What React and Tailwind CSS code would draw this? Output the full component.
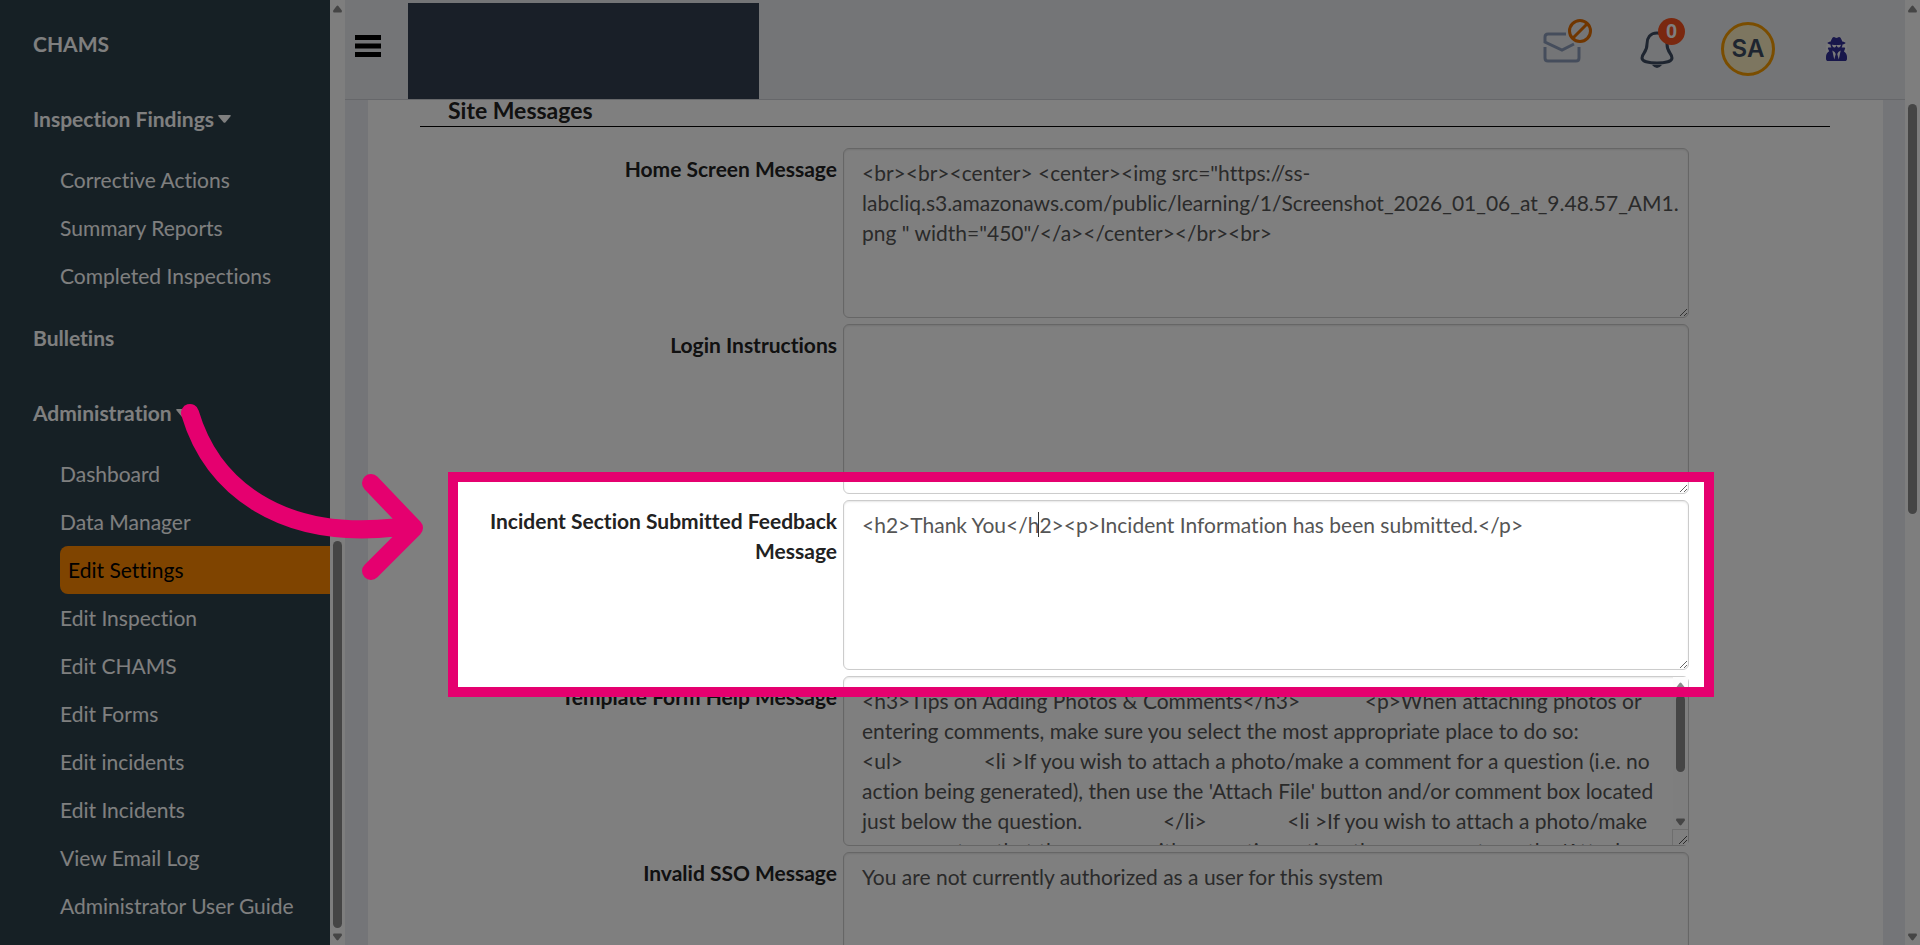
import React from 'react';
import { FaUserSecret } from 'react-icons/fa';

const navSections = [
  { title: 'CHAMS', items: [] },
  {
    title: 'Inspection Findings',
    caret: true,
    items: ['Corrective Actions', 'Summary Reports', 'Completed Inspections'],
  },
  { title: 'Bulletins', items: [] },
  {
    title: 'Administration',
    caret: true,
    items: [
      'Dashboard',
      'Data Manager',
      'Edit Settings',
      'Edit Inspection',
      'Edit CHAMS',
      'Edit Forms',
      'Edit incidents',
      'Edit Incidents',
      'View Email Log',
      'Administrator User Guide',
    ],
  },
];

const messages = [
  {
    id: 'home',
    label: 'Home Screen Message',
    value:
      '<br><br><center> <center><img src="https://ss-labcliq.s3.amazonaws.com/public/learning/1/Screenshot_2026_01_06_at_9.48.57_AM1.png " width="450"/</a></center></br><br>',
  },
  { id: 'login', label: 'Login Instructions', value: '' },
  {
    id: 'feedback',
    label: 'Incident Section Submitted Feedback Message',
    value: '<h2>Thank You</h2><p>Incident Information has been submitted.</p>',
    highlighted: true,
  },
  {
    id: 'template',
    label: 'Template Form Help Message',
    value:
      "<h3>Tips on Adding Photos & Comments</h3>            <p>When attaching photos or entering comments, make sure you select the most appropriate place to do so:               <ul>               <li >If you wish to attach a photo/make a comment for a question (i.e. no action being generated), then use the 'Attach File' button and/or comment box located just below the question.               </li>               <li >If you wish to attach a photo/make a comment so that the person with corrective action, then you must use the 'Attach File' button",
    scroll: true,
  },
  {
    id: 'sso',
    label: 'Invalid SSO Message',
    value: 'You are not currently authorized as a user for this system',
  },
];

const ArrowUp = () => (
  <svg className="h-2 w-[9px] shrink-0" viewBox="0 0 9 8" fill="#8b8b8b">
    <path d="M3.6 .9Q4.5 0 5.4 .9L8.8 5.6Q9.2 7.4 8 7.4H1Q-.2 7.4 .2 5.6Z" />
  </svg>
);

const ArrowDown = () => (
  <svg className="h-2 w-[9px] shrink-0" viewBox="0 0 9 8" fill="#8b8b8b">
    <path d="M3.6 7.1Q4.5 8 5.4 7.1L8.8 2.4Q9.2 .6 8 .6H1Q-.2 .6 .2 2.4Z" />
  </svg>
);

// start and size are percentages of the track
const Scrollbar = ({ start, size }) => (
  <div className="flex h-full w-[15px] shrink-0 flex-col items-center bg-[#fdfdfd] pt-[5px] pb-1">
    <ArrowUp />
    <div className="my-[5px] w-[9px] flex-1">
      <div style={{ height: `${start}%` }} />
      <div className="rounded-full bg-[#8b8b8b]" style={{ height: `${size}%` }} />
    </div>
    <ArrowDown />
  </div>
);

const Sidebar = () => (
  <nav className="flex w-[345px] shrink-0 bg-[#2c404b]">
    <div className="flex-1 overflow-hidden pt-1.5">
      {navSections.map((section) => (
        <div key={section.title}>
          <a href="#" className="flex h-[75px] items-center gap-1 pl-[33px] font-bold text-[#fefefe]">
            {section.title}
            {section.caret && (
              <svg className="h-2 w-[13px]" viewBox="0 0 13 8" fill="currentColor">
                <path d="M1 0H12Q13.4 .3 12.4 1.6L7.4 7.4Q6.5 8.2 5.6 7.4L.6 1.6Q-.4 .3 1 0Z" />
              </svg>
            )}
          </a>
          {section.items.length > 0 && (
            <ul className="pl-[60px]">
              {section.items.map((item) => (
                <li key={item}>
                  <a
                    href="#"
                    className={
                      item === 'Edit Settings'
                        ? 'flex h-12 items-center rounded-l-lg bg-[#ff8800] pl-2 text-black'
                        : 'flex h-12 items-center text-[#fefefe]'
                    }
                  >
                    {item}
                  </a>
                </li>
              ))}
            </ul>
          )}
        </div>
      ))}
    </div>
    <Scrollbar start={57.5} size={42.5} />
  </nav>
);

const Header = () => (
  <header className="flex h-[100px] shrink-0 items-center border-b border-[#ccced4] bg-[#e9ebee] pl-2.5">
    <button type="button" aria-label="Menu" className="mb-2">
      <svg className="h-[22px] w-[26px]" viewBox="0 0 26 22">
        <path d="M0 0H26V5H0ZM0 8.5H26V13.5H0ZM0 17H26V22H0Z" />
      </svg>
    </button>
    <div className="ml-[27px] h-24 w-[351px] self-end bg-[#333f50]" />
    <div className="ml-auto flex items-center pr-[58px] pb-0.5">
      <button type="button" aria-label="Messages off" className="mr-12">
        <svg className="h-[50px] w-[50px] overflow-visible" viewBox="0 0 50 50" fill="none">
          <path
            d="M24 10H6Q3 10 3 13V18L20 26L32 20M3 23V34Q3 37 6 37H34Q37 37 37 34V23"
            stroke="#8b9bb8"
            strokeWidth="3"
          />
          <circle cx="38" cy="7" r="10.5" stroke="#e06c00" strokeWidth="3" />
          <path d="M31 14L45 0" stroke="#e06c00" strokeWidth="3" />
        </svg>
      </button>
      <button type="button" aria-label="Notifications" className="relative mr-[37px]">
        <svg className="h-[50px] w-[44px]" viewBox="0 0 44 50" fill="none">
          <path
            d="M17 9C10 9 7 14 7 20C7 29 2 29 2 34C2 37 8 39 17 39C26 39 32 37 32 34C32 29 27 29 27 20C27 14 24 9 17 9Z"
            stroke="#3c4a60"
            strokeWidth="3"
          />
          <path d="M12 41H22Q17 47 12 41Z" fill="#3c4a60" />
        </svg>
        <span className="absolute -top-1.5 left-[18px] flex size-[27px] items-center justify-center rounded-full bg-[#f4511e] font-['Liberation_Sans',sans-serif] text-xl font-bold text-white">
          0
        </span>
      </button>
      <button
        type="button"
        className="mr-[51px] flex size-[54px] items-center justify-center rounded-full border-3 border-[#f59a00] bg-[#faecc0] font-['Inter','Liberation_Sans',sans-serif] text-2xl font-semibold text-[#3c4a60]"
      >
        SA
      </button>
      <button type="button" aria-label="Impersonate" className="rounded-full bg-[#f5f5f7]">
        <FaUserSecret className="h-6 w-[21px] text-[#312e96]" />
      </button>
    </div>
  </header>
);

const Highlight = () => (
  <div className="pointer-events-none absolute -top-7 right-[116px] left-7 z-10 h-[225px] border-10 border-[#e5006f] shadow-[0_0_0_3000px_rgba(0,0,0,0.5)]" />
);

const MessageRow = ({ message }) => (
  <div className="relative mb-1.5 flex">
    <label htmlFor={message.id} className="w-[30%] pt-1.5 pr-1.5 pl-7 text-right font-bold text-[#222]">
      {message.label}
    </label>
    <div className="relative h-[170px] w-[60%]">
      <textarea
        id={message.id}
        defaultValue={message.value}
        className={
          message.scroll
            ? 'block h-full w-full overflow-hidden rounded-md border border-[#ccc] bg-white py-[9px] pr-[33px] pl-[18px] text-[#555] shadow-[inset_0_1px_2px_rgba(0,0,0,0.1)]'
            : 'block h-full w-full overflow-hidden rounded-md border border-[#ccc] bg-white py-[9px] pr-2 pl-[18px] text-[#555] shadow-[inset_0_1px_2px_rgba(0,0,0,0.1)]'
        }
      />
      {message.scroll && (
        <>
          <div className="absolute top-px right-px bottom-4">
            <Scrollbar start={0} size={65} />
          </div>
          <div className="absolute right-px bottom-px size-4 border-t border-l border-[#dcdcdc] bg-white">
            <svg className="mt-1.5 ml-1.5 size-2" viewBox="0 0 8 8" stroke="#555">
              <path d="M0 8L8 0M4 8L8 4" />
            </svg>
          </div>
        </>
      )}
      {message.highlighted && <div className="absolute top-3 left-[195px] h-[25px] w-px bg-[#333]" />}
    </div>
    {message.highlighted && <Highlight />}
  </div>
);

const App = () => {
  return (
    <div className="relative flex h-screen overflow-hidden bg-[#e9ebf0] font-[Lato,'Liberation_Sans',sans-serif] text-[21px] leading-[30px] [font-variant-ligatures:none]">
      <Sidebar />
      <div className="flex min-w-0 flex-1 flex-col">
        <Header />
        <main className="mr-[22px] ml-[23px] flex-1 bg-white pr-[53px] pl-[52px]">
          <h2 className="mb-[21px] border-b border-black pb-1.5 pl-7 text-[23px] leading-5 font-bold text-[#222]">
            Site Messages
          </h2>
          {messages.map((message) => (
            <MessageRow key={message.id} message={message} />
          ))}
        </main>
      </div>
      <Scrollbar start={9.5} size={45} />
      {/* callout arrow from the Administration menu to the highlighted field */}
      <svg
        className="pointer-events-none absolute top-[400px] left-[170px] z-20 h-[190px] w-[260px]"
        viewBox="170 400 260 190"
        fill="none"
        stroke="#e5006f"
        strokeWidth="18"
        strokeLinecap="round"
        strokeLinejoin="round"
      >
        <path d="M190 413C212 487 280 540 395 527.5M371 483L414 528L371 571" />
      </svg>
    </div>
  );
};

export default App;
